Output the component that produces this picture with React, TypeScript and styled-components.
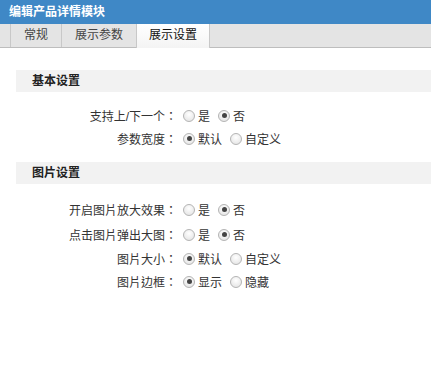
import React from 'react'
import styled, { createGlobalStyle } from 'styled-components'

const GlobalStyle = createGlobalStyle`
  html, body {
    margin: 0;
    padding: 0;
    background: #ffffff;
  }
  body {
    font-family: "Liberation Sans", "Noto Sans CJK SC", sans-serif;
    font-size: 12px;
    color: #333333;
  }
`

const Panel = styled.div`
  width: 431px;
  height: 381px;
  background: #ffffff;
`

const TitleBar = styled.div`
  height: 24px;
  line-height: 24px;
  padding-left: 9px;
  background: #3f88c6;
  color: #ffffff;
  font-weight: bold;
  font-size: 12px;
`

const TabBar = styled.div`
  display: flex;
  align-items: flex-end;
  height: 23px;
  padding-left: 10px;
  background: #e4e4e4;
  border-bottom: 1px solid #bdbdbd;
`

const Tab = styled.div<{ $active?: boolean }>`
  line-height: 23px;
  padding: 0 ${p => (p.$active ? '12px' : '13px')};
  border-left: 1px solid #c8c8c8;
  border-right: ${p => (p.$active ? '1px solid #c8c8c8' : 'none')};
  color: ${p => (p.$active ? '#111111' : '#444444')};
  background: ${p => (p.$active ? 'linear-gradient(#ffffff, #f4f4f4)' : 'transparent')};
  margin-bottom: ${p => (p.$active ? '-1px' : '0')};
  height: ${p => (p.$active ? '24px' : '23px')};
`

const Body = styled.div`
  padding: 22px 0 0 16px;
`

const SectionHead = styled.div`
  height: 22px;
  line-height: 22px;
  padding-left: 16px;
  background: #f2f2f2;
  font-weight: bold;
  color: #222222;
`

const Rows = styled.div<{ $top: number }>`
  display: flex;
  flex-direction: column;
  padding: ${p => p.$top}px 0 12px;
`

const Row = styled.div<{ $tall?: boolean }>`
  display: flex;
  align-items: center;
  height: ${p => (p.$tall ? '25px' : '23px')};
`

const Label = styled.div`
  width: 161px;
  text-align: right;
  color: #333333;
  font-family: "Liberation Sans", "Noto Sans CJK TC", sans-serif;
`

const Option = styled.label`
  display: flex;
  align-items: center;
  margin-left: 6px;
  margin-right: 2px;
  color: #333333;
`

const Radio = styled.span<{ $on?: boolean }>`
  position: relative;
  width: 10px;
  height: 10px;
  margin-right: 3px;
  border-radius: 50%;
  border: 1px solid #b4b4b4;
  background: radial-gradient(circle at 50% 35%, #ffffff, #e0e0e0);
  &::after {
    content: '';
    display: ${p => (p.$on ? 'block' : 'none')};
    position: absolute;
    left: 2.5px;
    top: 2.5px;
    width: 5px;
    height: 5px;
    border-radius: 50%;
    background: #444444;
  }
`

type Item = { label: string; opts: string[]; on: number; tall?: boolean }

const basic: Item[] = [
  { label: '支持上/下一个：', opts: ['是', '否'], on: 1 },
  { label: '参数宽度：', opts: ['默认', '自定义'], on: 0 },
]

const picture: Item[] = [
  { label: '开启图片放大效果：', opts: ['是', '否'], on: 1, tall: true },
  { label: '点击图片弹出大图：', opts: ['是', '否'], on: 1, tall: true },
  { label: '图片大小：', opts: ['默认', '自定义'], on: 0 },
  { label: '图片边框：', opts: ['显示', '隐藏'], on: 0 },
]

const renderRows = (items: Item[]) =>
  items.map(item => (
    <Row key={item.label} $tall={item.tall}>
      <Label>{item.label}</Label>
      {item.opts.map((o, i) => (
        <Option key={o}>
          <Radio $on={i === item.on} />
          {o}
        </Option>
      ))}
    </Row>
  ))

const App = () => {
  return (
    <Panel>
      <GlobalStyle />
      <TitleBar>编辑产品详情模块</TitleBar>
      <TabBar>
        <Tab>常规</Tab>
        <Tab>展示参数</Tab>
        <Tab $active>展示设置</Tab>
      </TabBar>
      <Body>
        <SectionHead>基本设置</SectionHead>
        <Rows $top={12}>{renderRows(basic)}</Rows>
        <SectionHead>图片设置</SectionHead>
        <Rows $top={13}>{renderRows(picture)}</Rows>
      </Body>
    </Panel>
  )
}

export default App
